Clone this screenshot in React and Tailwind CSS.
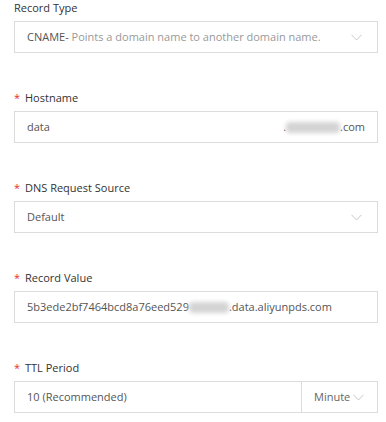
const Chevron = () => (
  <svg width="11" height="7" viewBox="0 0 11 7" className="shrink-0">
    <path d="M0.5 0.8 L5.5 6 L10.5 0.8" fill="none" stroke="#c8c8c8" strokeWidth="1" />
  </svg>
)

const Blur = ({ w }) => (
  <span className="inline-block h-[11px] bg-[#d4d4d4] blur-[2px] rounded-sm" style={{ width: w }} />
)

const Label = ({ required, children }) => (
  <div className="flex items-center h-[15px] text-[11px] text-[#333] leading-[15px]">
    {required && <span className="text-[#e62e2e] w-[11px] text-[11px] leading-[15px]">*</span>}
    <span>{children}</span>
  </div>
)

const Box = ({ children, className = "" }) => (
  <div className={`h-8 border border-[#dcdcdc] bg-white flex items-center text-[11px] text-[#555] ${className}`}>
    {children}
  </div>
)

export default function App() {
  return (
    <div
      className="w-[386px] h-[422px] bg-white pl-[14px] pr-[8px] overflow-hidden"
      style={{ fontFamily: '"Segoe UI", "Open Sans", "Noto Sans", sans-serif' }}
    >
      <div className="flex flex-col gap-[37px]">
        <div className="flex flex-col gap-[6px]">
          <Label>Record Type</Label>
          <Box className="pl-3 pr-[15px] justify-between">
            <span>
              CNAME-<span className="text-[#999]"> Points a domain name to another domain name.</span>
            </span>
            <Chevron />
          </Box>
        </div>

        <div className="flex flex-col gap-[6px]">
          <Label required>Hostname</Label>
          <Box className="pl-3 pr-3 justify-between">
            <span>data</span>
            <span className="flex items-center">
              <span>.</span>
              <Blur w={54} />
              <span>.com</span>
            </span>
          </Box>
        </div>

        <div className="flex flex-col gap-[6px]">
          <Label required>DNS Request Source</Label>
          <Box className="pl-3 pr-[15px] justify-between">
            <span>Default</span>
            <Chevron />
          </Box>
        </div>

        <div className="flex flex-col gap-[6px]">
          <Label required>Record Value</Label>
          <Box className="pl-3 pr-3">
            <span>5b3ede2bf7464bcd8a76eed529</span>
            <Blur w={40} />
            <span>.data.aliyunpds.com</span>
          </Box>
        </div>

        <div className="flex flex-col gap-[6px]">
          <Label required>TTL Period</Label>
          <div className="flex h-8 border border-[#dcdcdc] text-[11px] text-[#555]">
            <div className="flex-1 flex items-center pl-3">10 (Recommended)</div>
            <div className="w-[76px] border-l border-[#dcdcdc] flex items-center pl-3 gap-[3px] text-[#666]">
              <span>Minute</span>
              <Chevron />
            </div>
          </div>
        </div>
      </div>
    </div>
  )
}
